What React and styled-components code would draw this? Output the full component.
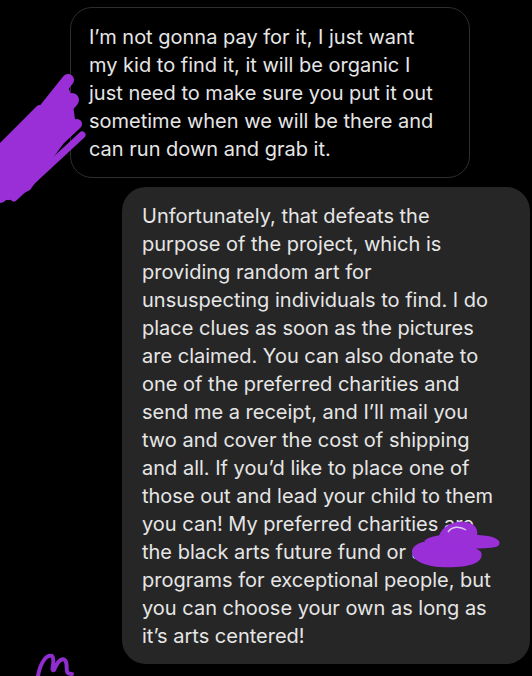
import React from "react";
import styled, { createGlobalStyle } from "styled-components";

const Global = createGlobalStyle`
  html, body { margin: 0; padding: 0; background: #000; }
  body { font-family: Inter, "Noto Sans", sans-serif; -webkit-font-smoothing: antialiased; }
`;

const Page = styled.div`
  position: relative;
  width: 532px;
  height: 676px;
  overflow: hidden;
  background: #000;
  display: flex;
  flex-direction: column;
  gap: 9px;
  padding-top: 7px;
  box-sizing: border-box;
`;

const Bubble = styled.div`
  box-sizing: border-box;
  margin-left: ${(p) => p.$left}px;
  width: ${(p) => p.$width}px;
  padding: ${(p) => p.$pad};
  border-radius: ${(p) => p.$radius}px;
  background: ${(p) => (p.$mine ? "#262626" : "#000")};
  border: ${(p) => (p.$mine ? "none" : "1.5px solid #2e2e2e")};
  color: #e6e6e6;
  font-size: 20px;
  line-height: 28px;
  letter-spacing: 0;
  white-space: pre-line;
`;

const Scribbles = styled.svg`
  position: absolute;
  left: 0;
  top: 0;
  pointer-events: none;
`;

const first = `I’m not gonna pay for it, I just want
my kid to find it, it will be organic I
just need to make sure you put it out
sometime when we will be there and
can run down and grab it.`;

const second = `Unfortunately, that defeats the
purpose of the project, which is
providing random art for
unsuspecting individuals to find. I do
place clues as soon as the pictures
are claimed. You can also donate to
one of the preferred charities and
send me a receipt, and I’ll mail you
two and cover the cost of shipping
and all. If you’d like to place one of
those out and lead your child to them
you can! My preferred charities are
the black arts future fund or arts in
programs for exceptional people, but
you can choose your own as long as
it’s arts centered!`;

export default function App() {
  return (
    <>
      <Global />
      <Page>
        <Bubble $left={70} $width={400} $radius={22} $pad="15px 12px 14px 18px">
          {first}
        </Bubble>
        <Bubble $mine $left={122} $width={408} $radius={24} $pad="15px 8px 14px 20px">
          {second}
        </Bubble>
        <Scribbles width="532" height="676" viewBox="0 0 532 676">
          <g stroke="#9a2fd8" strokeLinecap="round" fill="none">
            <path d="M4 160 L68 80" strokeWidth="12" />
            <path d="M2 178 L72 100" strokeWidth="14" />
            <path d="M6 190 L77 124" strokeWidth="10" />
            <path d="M14 198 L82 135" strokeWidth="7" />
            <path d="M0 196 L40 160" strokeWidth="14" />
            <path d="M0 150 L40 110" strokeWidth="10" />
          </g>
          <path d="M0 145 L40 108 L66 80 L72 98 L76 126 L30 190 L10 200 L0 200 Z" fill="#9a2fd8" />
          <path
            d="M38 676 C40 664 46 654 52 656 C56 660 50 672 54 670 C58 660 64 656 66 662 C68 668 64 674 72 674"
            stroke="#8f2dcf"
            strokeWidth="4"
            fill="none"
            strokeLinecap="round"
          />
          <g fill="#9a2fd8">
            <path d="M412 552 C412 544 424 540 440 540 C458 539 476 546 481 552 C484 560 476 566 456 567 C430 569 412 562 412 552 Z" />
            <path d="M424 541 C430 534 460 532 488 536 C498 538 502 542 498 546 C492 549 470 549 440 548 Z" />
            <path d="M438 542 C438 528 452 520 466 522 C478 524 480 534 474 542 Z" />
          </g>
          <path d="M448 532 C452 526 460 526 466 530" stroke="#d9c9ee" strokeWidth="1.5" fill="none" />
        </Scribbles>
      </Page>
    </>
  );
}
